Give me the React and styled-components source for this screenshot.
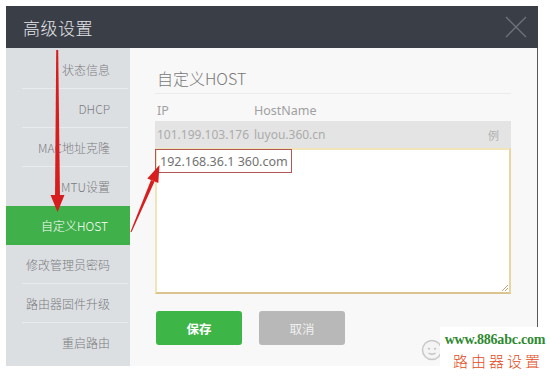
import React from "react";
import styled, { createGlobalStyle } from "styled-components";

const Global = createGlobalStyle`
  html, body { margin: 0; padding: 0; background: #ffffff; }
  body { font-family: "Noto Sans", "Noto Sans CJK SC", sans-serif; }
  * { box-sizing: border-box; }
`;

const Page = styled.div`
  position: relative;
  width: 550px;
  height: 376px;
  padding: 6px 0 0 6px;
  overflow: hidden;
`;

const Dialog = styled.div`
  width: 532px;
  height: 360px;
  display: flex;
  flex-direction: column;
`;

const Header = styled.div`
  height: 42px;
  background: #3a3e47;
  display: flex;
  align-items: center;
  justify-content: space-between;
  padding: 0 10px 0 17px;
`;

const Title = styled.div`
  color: #e4e5e7;
  font-family: "Noto Sans CJK SC", sans-serif;
  font-size: 17px;
  font-weight: 300;
  letter-spacing: 0.5px;
`;

const Close = styled.svg`
  width: 24px;
  height: 24px;
  display: block;
`;

const Body = styled.div`
  flex: 1;
  display: flex;
  border-right: 1px solid #5a5a5a;
`;

const Sidebar = styled.div`
  width: 124px;
  background: #dcdfe2;
  padding-top: 2px;
  display: flex;
  flex-direction: column;
`;

const NavItem = styled.div`
  height: 39px;
  display: flex;
  align-items: center;
  justify-content: flex-end;
  padding-right: ${(p) => (p.$active ? "22px" : "20px")};
  font-family: "Noto Sans CJK SC", sans-serif;
  font-size: 12px;
  font-weight: 300;
  color: ${(p) => (p.$active ? "#ffffff" : "#7b7c7f")};
  background: ${(p) => (p.$active ? "#3fb04a" : "transparent")};
  position: relative;
  &::after {
    content: "";
    position: absolute;
    left: 16px;
    right: 2px;
    bottom: 0;
    height: 1px;
    background: ${(p) => (p.$last || p.$active ? "transparent" : "#e9ebed")};
  }
`;

const Content = styled.div`
  flex: 1;
  background: #f8f8f8;
  padding: 19px 26px 0 25px;
  display: flex;
  flex-direction: column;
`;

const Heading = styled.div`
  font-family: "Noto Sans CJK SC", sans-serif;
  font-size: 16px;
  font-weight: 300;
  color: #777777;
  line-height: 22px;
  padding: 0 0 4px 2px;
  border-bottom: 1px solid #ebebeb;
`;

const Grid = styled.div`
  display: grid;
  grid-template-columns: 97px 1fr auto;
  align-items: center;
  padding: 0 12px 0 2px;
  height: ${(p) => p.$h}px;
  background: ${(p) => p.$bg || "transparent"};
  color: ${(p) => p.$color};
  font-size: 12px;
  font-family: "Noto Sans", "Noto Sans CJK SC", sans-serif;
`;

const Labels = styled(Grid)`
  margin-top: 8px;
  font-size: 12.5px;
`;

const Hint = styled.span`
  font-family: "Noto Sans CJK SC", sans-serif;
  font-size: 11px;
  color: #b0b0b0;
`;

const TextArea = styled.div`
  position: relative;
  height: 146px;
  background: #ffffff;
  border: 2px solid #f1e4b8;
  border-bottom-color: #dcc48f;
  border-right-color: #e8d6a2;
  padding: 4px 3px;
  font-size: 12.5px;
  color: #727272;
  line-height: 16px;
`;

const Marked = styled.span`
  position: absolute;
  left: -2px;
  top: -1px;
  width: 137px;
  height: 24px;
  border: 1.5px solid #b15a55;
`;

const Grip = styled.svg`
  position: absolute;
  right: 0;
  bottom: 0;
  width: 10px;
  height: 10px;
`;

const Buttons = styled.div`
  display: flex;
  gap: 17px;
  margin-top: 17px;
  padding-left: 1px;
`;

const Button = styled.div`
  width: 86px;
  height: 34px;
  border-radius: 3px;
  display: flex;
  align-items: center;
  justify-content: center;
  font-family: "Noto Sans CJK SC", sans-serif;
  font-size: 12.5px;
  font-weight: ${(p) => (p.$primary ? 700 : 400)};
  color: ${(p) => (p.$primary ? "#ffffff" : "#f0f0f0")};
  background: ${(p) => (p.$primary ? "#3eb547" : "#b8b8b8")};
`;

const Overlay = styled.svg`
  position: absolute;
  left: 0;
  top: 0;
  width: 550px;
  height: 376px;
  pointer-events: none;
`;

const Watermark = styled.div`
  position: absolute;
  left: 440px;
  top: 327px;
  width: 110px;
  height: 49px;
  background: #ffffff;
  display: flex;
  flex-direction: column;
  align-items: center;
  padding-top: 4px;
`;

const Site = styled.div`
  font-family: "Liberation Serif", serif;
  font-weight: 700;
  font-size: 14px;
  color: #2f8a31;
  line-height: 18px;
  letter-spacing: -0.2px;
`;

const Slogan = styled.div`
  font-family: "Noto Sans CJK SC", serif;
  font-size: 15px;
  font-weight: 300;
  color: #e24a22;
  letter-spacing: 3px;
  line-height: 24px;
  padding-left: 6px;
`;

const Smiley = styled.svg`
  position: absolute;
  left: 421px;
  top: 339px;
  width: 22px;
  height: 22px;
`;

const nav = [
  "状态信息",
  "DHCP",
  "MAC地址克隆",
  "MTU设置",
  "自定义HOST",
  "修改管理员密码",
  "路由器固件升级",
  "重启路由",
];

export default function App() {
  return (
    <Page>
      <Global />
      <Dialog>
        <Header>
          <Title>高级设置</Title>
          <Close viewBox="0 0 24 24">
            <path d="M2 2 L22 22 M22 2 L2 22" stroke="#6d717a" strokeWidth="1.4" fill="none" />
          </Close>
        </Header>
        <Body>
          <Sidebar>
            {nav.map((n, i) => (
              <NavItem key={n} $active={i === 4} $last={i === nav.length - 1 || i === 3}>
                {n}
              </NavItem>
            ))}
          </Sidebar>
          <Content>
            <Heading>自定义HOST</Heading>
            <Labels $h={16} $color="#a0a0a0">
              <span>IP</span>
              <span>HostName</span>
              <span />
            </Labels>
            <Grid $h={27} $bg="#e4e4e4" $color="#ababab" style={{ marginTop: 3 }}>
              <span>101.199.103.176</span>
              <span>luyou.360.cn</span>
              <Hint>例</Hint>
            </Grid>
            <TextArea>
              192.168.36.1 360.com
              <Marked />
              <Grip viewBox="0 0 10 10">
                <path d="M9 3 L3 9 M9 6 L6 9" stroke="#b9a57a" strokeWidth="1" />
              </Grip>
            </TextArea>
            <Buttons>
              <Button $primary>保存</Button>
              <Button>取消</Button>
            </Buttons>
          </Content>
        </Body>
      </Dialog>

      <Overlay viewBox="0 0 550 376">
        <polygon points="56.2,50 58.2,50 60,198 55,198" fill="#d61e1e" />
        <polygon points="50.5,195 64.5,195 57.5,212" fill="#d61e1e" />
        <polygon points="130.3,232.3 131.7,231.7 154.6,181.5 151,179.9" fill="#d61e1e" />
        <polygon points="147.3,178.4 158.3,183 159.5,165" fill="#d61e1e" />
      </Overlay>

      <Smiley viewBox="0 0 22 22">
        <circle cx="11" cy="11" r="9.5" fill="#f4f4f4" stroke="#c8c8c8" strokeWidth="1.5" />
        <path d="M7 9.5 L9 10 M13 10 L15 9.5 M7.5 14 Q11 16.5 14.5 14" stroke="#c0c0c0" strokeWidth="1.3" fill="none" />
      </Smiley>
      <Watermark>
        <Site>www.886abc.com</Site>
        <Slogan>路由器设置</Slogan>
      </Watermark>
    </Page>
  );
}
